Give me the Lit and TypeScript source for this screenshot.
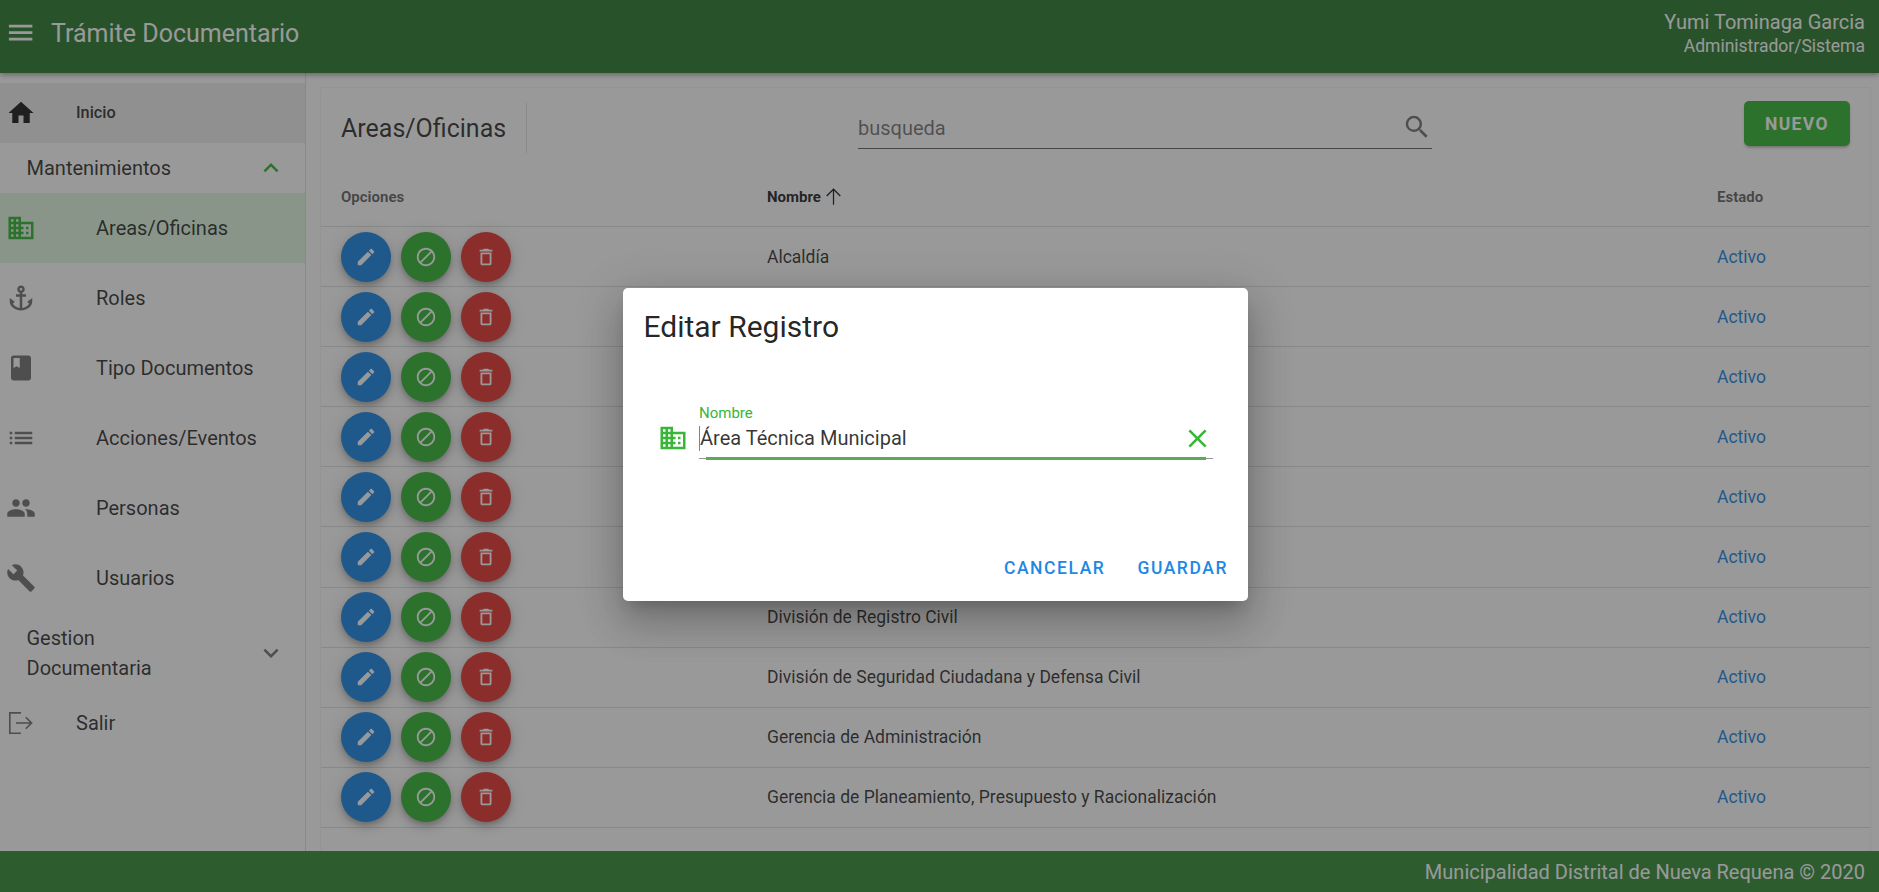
import { LitElement, html, css, svg } from "lit";
import { customElement } from "lit/decorators.js";

// icon paths, 24x24 viewBox
const ICONS: Record<string, string> = {
  menu: "M3,6H21V8H3V6M3,11H21V13H3V11M3,16H21V18H3V16Z",
  home: "M10,20V14H14V20H19V12H22L12,3L2,12H5V20H10Z",
  up: "M7.41,15.41L12,10.83L16.59,15.41L18,14L12,8L6,14L7.41,15.41Z",
  down: "M7.41,8.58L12,13.17L16.59,8.58L18,10L12,16L6,10L7.41,8.58Z",
  domain:
    "M18,15H16V17H18M18,11H16V13H18M20,19H12V17H14V15H12V13H14V11H12V9H20M10,7H8V5H10M10,11H8V9H10M10,15H8V13H10M10,19H8V17H10M6,7H4V5H6M6,11H4V9H6M6,15H4V13H6M6,19H4V17H6M12,7V3H2V21H22V7H12Z",
  anchor:
    "M17 15l1.55 1.55c-.96 1.69-3.33 3.04-5.55 3.37V11h3V9h-3V7.82C14.16 7.4 15 6.3 15 5c0-1.65-1.35-3-3-3S9 3.35 9 5c0 1.3.84 2.4 2 2.82V9H8v2h3v8.92c-2.22-.33-4.59-1.68-5.55-3.37L7 15l-4-3v3c0 3.88 4.92 7 9 7s9-3.12 9-7v-3l-4 3zM12 4c.55 0 1 .45 1 1s-.45 1-1 1-1-.45-1-1 .45-1 1-1z",
  book: "M18 2H6c-1.1 0-2 .9-2 2v16c0 1.1.9 2 2 2h12c1.1 0 2-.9 2-2V4c0-1.1-.9-2-2-2zM6 4h5v8l-2.5-1.5L6 12V4z",
  list: "M3 13h2v-2H3v2zm0 4h2v-2H3v2zm0-8h2V7H3v2zm4 4h14v-2H7v2zm0 4h14v-2H7v2zM7 7v2h14V7H7z",
  people:
    "M16 11c1.66 0 2.99-1.34 2.99-3S17.66 5 16 5c-1.66 0-3 1.34-3 3s1.34 3 3 3zm-8 0c1.66 0 2.99-1.34 2.99-3S9.66 5 8 5C6.34 5 5 6.34 5 8s1.34 3 3 3zm0 2c-2.33 0-7 1.17-7 3.5V19h14v-2.5c0-2.33-4.67-3.5-7-3.5zm8 0c-.29 0-.62.02-.97.05 1.16.84 1.97 1.97 1.97 3.45V19h6v-2.5c0-2.33-4.67-3.5-7-3.5z",
  wrench:
    "M22.7 19l-9.1-9.1c.9-2.3.4-5-1.5-6.9-2-2-5-2.4-7.4-1.3L9 6 6 9 1.6 4.7C.4 7.1.9 10.1 2.9 12.1c1.9 1.9 4.6 2.4 6.9 1.5l9.1 9.1c.4.4 1 .4 1.4 0l2.3-2.3c.5-.4.5-1.1.1-1.4z",
  logout:
    "M12,3.2H2.4V20.8H12V19.5H3.7V4.5H12ZM8,11.35H18.9L15.4,7.85L16.3,6.95L21.4,12L16.3,17.05L15.4,16.15L18.9,12.65H8Z",
  pencil:
    "M20.71,7.04C21.1,6.65 21.1,6 20.71,5.63L18.37,3.29C18,2.9 17.35,2.9 16.96,3.29L15.12,5.12L18.87,8.87M3,17.25V21H6.75L17.81,9.93L14.06,6.18L3,17.25Z",
  block:
    "M12 2C6.48 2 2 6.48 2 12s4.48 10 10 10 10-4.48 10-10S17.52 2 12 2zM4 12c0-4.42 3.58-8 8-8 1.85 0 3.55.63 4.9 1.69L5.69 16.9C4.63 15.55 4 13.85 4 12zm8 8c-1.85 0-3.55-.63-4.9-1.69L18.31 7.1C19.37 8.45 20 10.15 20 12c0 4.42-3.58 8-8 8z",
  trash:
    "M6,19A2,2 0 0,0 8,21H16A2,2 0 0,0 18,19V7H6V19M8,9H16V19H8V9M15.5,4L14.5,3H9.5L8.5,4H5V6H19V4H15.5Z",
  close:
    "M19,6.41L17.59,5L12,10.59L6.41,5L5,6.41L10.59,12L5,17.59L6.41,19L12,13.41L17.59,19L19,17.59L13.41,12L19,6.41Z",
  search:
    "M9.5,3A6.5,6.5 0 0,1 16,9.5C16,11.11 15.41,12.59 14.44,13.73L14.71,14H15.5L20.5,19L19,20.5L14,15.5V14.71L13.73,14.44C12.59,15.41 11.11,16 9.5,16A6.5,6.5 0 0,1 3,9.5A6.5,6.5 0 0,1 9.5,3M9.5,5C7,5 5,7 5,9.5C5,12 7,14 9.5,14C12,14 14,12 14,9.5C14,7 12,5 9.5,5Z",
  arrowUp: "M12.6,20H11.4V6.4L5.9,11.9L5,11L12,4L19,11L18.1,11.9L12.6,6.4V20Z",
};

const icon = (name: string, cls = "") => html`<svg class="icon ${cls}" viewBox="0 0 24 24">${svg`<path d=${ICONS[name]}></path>`}</svg>`;

const NAV = [
  { icon: "domain", label: "Areas/Oficinas", active: true },
  { icon: "anchor", label: "Roles" },
  { icon: "book", label: "Tipo Documentos" },
  { icon: "list", label: "Acciones/Eventos" },
  { icon: "people", label: "Personas" },
  { icon: "wrench", label: "Usuarios" },
];

const ROWS = [
  "Alcaldía",
  "Área Técnica Municipal",
  "División de Contabilidad",
  "División de Desarrollo Social",
  "División de Obras",
  "División de Rentas",
  "División de Registro Civil",
  "División de Seguridad Ciudadana y Defensa Civil",
  "Gerencia de Administración",
  "Gerencia de Planeamiento, Presupuesto y Racionalización",
];

@customElement("app-root")
export class AppRoot extends LitElement {
  static styles = css`
    :host {
      display: flex;
      flex-direction: column;
      position: relative;
      height: 100vh;
      overflow: hidden;
      background: #fff;
      color: rgba(0, 0, 0, 0.8);
      font-family: Roboto, "Liberation Sans", sans-serif;
    }

    .icon {
      display: block;
      flex: none;
      width: 30px;
      height: 30px;
      fill: currentColor;
    }

    /* Top bar */
    .topbar {
      flex: none;
      position: relative;
      z-index: 2;
      height: 73px;
      display: flex;
      justify-content: space-between;
      background: #2e7d32;
      color: #fff;
      box-shadow: 0 2px 5px rgba(0, 0, 0, 0.35);
    }

    .brand {
      display: flex;
      align-items: center;
      height: 66px;
      padding-left: 5.4px;
      gap: 14.4px;
      font-size: 25px;
    }

    .brand .icon {
      width: 31.25px;
      height: 31.25px;
    }

    .user {
      padding: 10px 14px 0 0;
      text-align: right;
      font-size: 20px;
      line-height: 24px;
    }

    .user small {
      display: block;
      font-size: 17.5px;
    }

    .middle {
      flex: 1;
      display: flex;
      min-height: 0;
    }

    /* Side menu */
    .side {
      flex: none;
      width: 305px;
      padding-top: 10px;
      border-right: 1px solid rgba(0, 0, 0, 0.12);
    }

    .link {
      display: flex;
      align-items: center;
      height: 60px;
      padding-left: 6px;
    }

    .link .icon {
      color: rgba(0, 0, 0, 0.54);
    }

    .link span {
      margin-left: 40px;
      font-size: 20px;
    }

    .link.home {
      background: #eee;
    }

    .link.home .icon {
      color: rgba(0, 0, 0, 0.87);
    }

    .link.home span {
      font-size: 16.25px;
      font-weight: 500;
      margin-top: -2px;
    }

    .group {
      display: flex;
      align-items: center;
      justify-content: space-between;
      min-height: 50px;
      padding: 0 19px 0 26.5px;
      font-size: 20px;
      line-height: 30px;
    }

    .group.tall {
      height: 80px;
    }

    .group .label {
      width: 190px;
    }

    .group .icon {
      color: rgba(0, 0, 0, 0.54);
    }

    .group.open .icon {
      color: #37b637;
    }

    .item {
      display: flex;
      align-items: center;
      height: 70px;
      padding-left: 6px;
      font-size: 20px;
    }

    .item .icon {
      color: rgba(0, 0, 0, 0.54);
    }

    .item span {
      margin-left: 60px;
    }

    .item.active {
      background: rgba(51, 204, 51, 0.14);
    }

    .item.active .icon {
      color: #37b637;
    }

    /* Main card */
    .main {
      flex: 1;
      min-width: 0;
      padding: 15px 9px 0 15px;
    }

    .card {
      height: 100%;
      background: #fff;
      box-shadow: 0 0 2px rgba(0, 0, 0, 0.12);
    }

    .toolbar {
      display: flex;
      align-items: center;
      height: 79px;
      padding: 0 20px;
    }

    .toolbar h1 {
      margin: 2px 0 0;
      width: 163px;
      white-space: nowrap;
      font-size: 25px;
      font-weight: 400;
    }

    .vline {
      width: 1px;
      height: 50px;
      margin: 0 331px 0 22px;
      background: rgba(0, 0, 0, 0.12);
    }

    .search {
      display: flex;
      align-items: center;
      justify-content: space-between;
      width: 574px;
      height: 41px;
      border-bottom: 1px solid rgba(0, 0, 0, 0.6);
      font-size: 20px;
      color: rgba(0, 0, 0, 0.54);
    }

    .search span {
      margin-top: 2px;
    }

    .new {
      align-self: flex-start;
      margin: 13px 0 0 auto;
      width: 106px;
      height: 45px;
      border: none;
      border-radius: 5px;
      background: #37b637;
      color: #fff;
      font: 700 17.5px Roboto, sans-serif;
      letter-spacing: 1.4px;
      box-shadow: 0 3px 3px -2px rgba(0, 0, 0, 0.2), 0 2px 3px rgba(0, 0, 0, 0.14);
    }

    .row {
      display: grid;
      grid-template-columns: 426px 950px 1fr;
      align-items: center;
      height: 60.1px;
      box-sizing: border-box;
      padding-left: 20px;
      border-bottom: 1px solid rgba(0, 0, 0, 0.12);
      font-size: 17.5px;
    }

    .row.head {
      height: 60px;
      font-size: 15px;
      font-weight: 700;
      color: rgba(0, 0, 0, 0.6);
    }

    .sorted {
      display: flex;
      align-items: center;
      color: rgba(0, 0, 0, 0.87);
    }

    .sorted .icon {
      width: 25px;
      height: 25px;
    }

    .actions {
      display: flex;
      gap: 10px;
    }

    .fab {
      display: flex;
      align-items: center;
      justify-content: center;
      width: 50px;
      height: 50px;
      border-radius: 50%;
      color: #fff;
      box-shadow: 0 3px 5px -1px rgba(0, 0, 0, 0.2), 0 6px 10px rgba(0, 0, 0, 0.14), 0 1px 18px rgba(0, 0, 0, 0.12);
    }

    .fab .icon {
      width: 22px;
      height: 22px;
    }

    .fab.blue {
      background: #1e88e5;
    }

    .fab.green {
      background: #37b637;
    }

    .fab.red {
      background: #e53935;
    }

    .state {
      color: #1e88e5;
    }

    .footer {
      flex: none;
      position: relative;
      z-index: 2;
      height: 41px;
      display: flex;
      align-items: center;
      justify-content: flex-end;
      padding-right: 14px;
      background: #388e3c;
      color: #fff;
      font-size: 20px;
    }

    /* Modal */
    .overlay {
      position: absolute;
      inset: 0;
      z-index: 5;
      display: flex;
      align-items: center;
      justify-content: center;
      padding-right: 8px;
      background: rgba(33, 33, 33, 0.46);
    }

    .dialog {
      display: flex;
      flex-direction: column;
      box-sizing: border-box;
      width: 625px;
      height: 313px;
      margin-top: -3px;
      border-radius: 5px;
      background: #fff;
      box-shadow: 0 11px 15px -7px rgba(0, 0, 0, 0.2), 0 24px 38px 3px rgba(0, 0, 0, 0.14), 0 9px 46px 8px rgba(0, 0, 0, 0.12);
    }

    .dialog h2 {
      margin: 0;
      height: 80px;
      padding-left: 20.5px;
      font-size: 30px;
      font-weight: 400;
      line-height: 77px;
      color: rgba(0, 0, 0, 0.87);
    }

    .field {
      display: flex;
      align-items: flex-end;
      gap: 11.5px;
      margin-top: 36px;
      padding: 0 35px 0 34.5px;
    }

    .field > .icon {
      color: #37b637;
      margin-bottom: 6px;
    }

    .control {
      flex: 1;
      position: relative;
      border-bottom: 1px solid rgba(0, 0, 0, 0.42);
    }

    .control label {
      display: block;
      height: 18px;
      font-size: 15px;
      line-height: 18px;
      color: #37b637;
    }

    .value {
      display: flex;
      align-items: center;
      justify-content: space-between;
      height: 36px;
      box-sizing: border-box;
      padding-bottom: 4px;
      font-size: 20px;
    }

    .value span {
      border-left: 1px solid #37b637;
      line-height: 25px;
    }

    .value .icon {
      width: 31px;
      height: 31px;
      color: #37b637;
    }

    .focus {
      position: absolute;
      left: 7px;
      right: 7px;
      bottom: -2px;
      height: 3px;
      background: #5aaa5a;
    }

    .buttons {
      display: flex;
      justify-content: flex-end;
      gap: 32px;
      margin-top: auto;
      padding: 0 20px 21px 0;
      font-size: 17.5px;
      font-weight: 500;
      line-height: 24px;
      letter-spacing: 1.56px;
      color: #1e88e5;
    }
  `;

  render() {
    return html`
      <header class="topbar">
        <div class="brand">${icon("menu")}<span>Trámite Documentario</span></div>
        <div class="user">Yumi Tominaga Garcia<small>Administrador/Sistema</small></div>
      </header>
      <div class="middle">
        <nav class="side">
          <div class="link home">${icon("home")}<span>Inicio</span></div>
          <div class="group open"><span class="label">Mantenimientos</span>${icon("up")}</div>
          ${NAV.map(
            (n) => html`<div class="item ${n.active ? "active" : ""}">${icon(n.icon)}<span>${n.label}</span></div>`
          )}
          <div class="group tall"><span class="label">Gestion Documentaria</span>${icon("down")}</div>
          <div class="link">${icon("logout")}<span>Salir</span></div>
        </nav>
        <main class="main">
          <section class="card">
            <div class="toolbar">
              <h1>Areas/Oficinas</h1>
              <div class="vline"></div>
              <div class="search"><span>busqueda</span>${icon("search")}</div>
              <button class="new">NUEVO</button>
            </div>
            <div class="row head">
              <span>Opciones</span>
              <span class="sorted">Nombre${icon("arrowUp")}</span>
              <span>Estado</span>
            </div>
            ${ROWS.map(
              (name) => html`
                <div class="row">
                  <div class="actions">
                    <div class="fab blue">${icon("pencil")}</div>
                    <div class="fab green">${icon("block")}</div>
                    <div class="fab red">${icon("trash")}</div>
                  </div>
                  <span>${name}</span>
                  <span class="state">Activo</span>
                </div>
              `
            )}
          </section>
        </main>
      </div>
      <footer class="footer">Municipalidad Distrital de Nueva Requena © 2020</footer>
      <div class="overlay">
        <div class="dialog">
          <h2>Editar Registro</h2>
          <div class="field">
            ${icon("domain")}
            <div class="control">
              <label>Nombre</label>
              <div class="value"><span>Área Técnica Municipal</span>${icon("close")}</div>
              <div class="focus"></div>
            </div>
          </div>
          <div class="buttons"><span>CANCELAR</span><span>GUARDAR</span></div>
        </div>
      </div>
    `;
  }
}
